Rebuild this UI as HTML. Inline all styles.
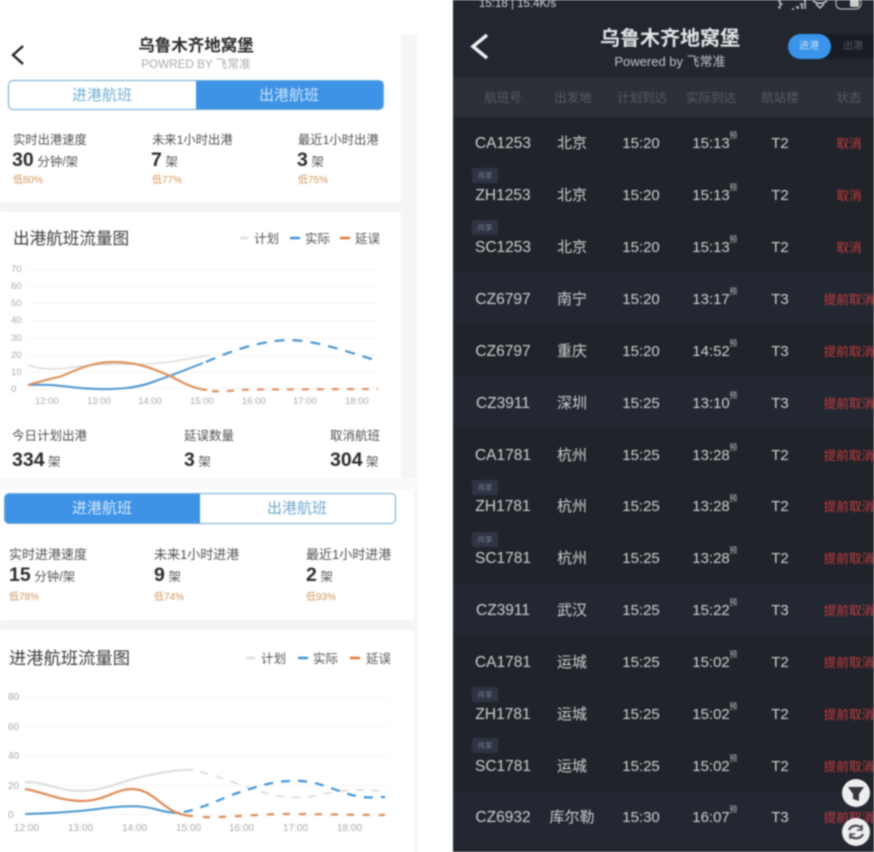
<!DOCTYPE html>
<html lang="zh"><head><meta charset="utf-8"><style>
html,body{margin:0;padding:0;width:874px;height:852px;overflow:hidden;background:#fff}
#w{position:absolute;left:0;top:0;width:874px;height:852px;overflow:hidden;filter:blur(.7px);font-family:"Liberation Sans","Noto Sans CJK SC",sans-serif}
.a{position:absolute;white-space:nowrap;line-height:1}
.c{transform:translateX(-50%)}
.b{font-weight:700;color:#2d2d2d;font-size:19.5px}
.u{font-size:12.5px;color:#555;font-weight:400;margin-left:3.5px}
.o{color:#d39559;font-size:10px}
.t{color:#505050;font-size:12.3px}
.t2{color:#505050;font-size:13px}
.l{color:#555;font-size:12.5px}
.row{position:absolute;left:453px;width:421px;height:52px;color:#cfd0d3;font-size:15px}
.row span{position:absolute;top:19px;line-height:16px;white-space:nowrap;transform:translateX(-50%)}
.row.x span{top:20px}
.row .f{left:50px;font-size:15.500px}.row .o1{left:119px}.row .p{left:188px}.row .r{left:258px}.row .m{left:327px}
.row .s{left:396px;color:#c23c3e;font-size:12.700px}
.row .r sup{position:absolute;left:37px;top:-5px;font-size:8px;line-height:9px;color:#bbb}
.row i{position:absolute;left:19px;top:0;width:26px;height:15px;border-radius:2px;background:#2f3545;color:#7a7f8c;font-size:7.500px;line-height:15px;text-align:center;font-style:normal}
.lt{background:#232731}.dk{background:#202329}
svg{position:absolute;left:0;top:0}
</style></head><body><div id="w">

<!-- left panel 1 -->
<div class="a" style="left:401px;top:35px;width:16px;height:443px;background:#f5f5f5"></div>
<div class="a" style="left:0;top:202px;width:401px;height:10px;background:#f5f5f5"></div>
<div class="a" style="left:0;top:478px;width:417px;height:12px;background:#fafafa"></div>
<div class="a c" style="left:196px;top:38px;font-size:16.500px;font-weight:700;color:#2d2d2d">乌鲁木齐地窝堡</div>
<div class="a c" style="left:196px;top:59px;font-size:11.700px;color:#aaa">POWRED BY 飞常准</div>
<div class="a" style="left:8px;top:80px;width:376px;height:30px;box-sizing:border-box;border:1.5px solid #6aa9cf;border-radius:5px;overflow:hidden;background:#fff">
  <div class="a" style="left:187px;top:-2px;width:190px;height:32px;background:#3e93e6"></div></div>
<div class="a c" style="left:102px;top:88px;font-size:15px;color:#71aed4">进港航班</div>
<div class="a c" style="left:289px;top:88px;font-size:15px;color:#cfe4f8">出港航班</div>

<div class="a t" style="left:13px;top:134px">实时出港速度</div>
<div class="a t" style="left:152px;top:134px">未来1小时出港</div>
<div class="a t" style="left:298px;top:134px">最近1小时出港</div>
<div class="a b" style="left:12px;top:151px">30<span class="u">分钟/架</span></div>
<div class="a b" style="left:151px;top:151px">7<span class="u">架</span></div>
<div class="a b" style="left:297px;top:151px">3<span class="u">架</span></div>
<div class="a o" style="left:13px;top:176px">低80%</div>
<div class="a o" style="left:152px;top:176px">低77%</div>
<div class="a o" style="left:298px;top:176px">低75%</div>

<div class="a" style="left:13px;top:231px;font-size:16.600px;color:#3d3d3d">出港航班流量图</div>
<div class="a l" style="left:254px;top:233px">计划</div>
<div class="a l" style="left:305px;top:233px">实际</div>
<div class="a l" style="left:355px;top:233px">延误</div>

<div class="a t" style="left:12px;top:430px;font-size:12.500px">今日计划出港</div>
<div class="a t" style="left:184px;top:430px;font-size:12.500px">延误数量</div>
<div class="a t" style="left:330px;top:430px;font-size:12.500px">取消航班</div>
<div class="a b" style="left:12px;top:451px">334<span class="u">架</span></div>
<div class="a b" style="left:184px;top:451px">3<span class="u">架</span></div>
<div class="a b" style="left:330px;top:451px">304<span class="u">架</span></div>

<!-- left panel 2 -->
<div class="a" style="left:414px;top:490px;width:4px;height:362px;background:#f6f6f6"></div>
<div class="a" style="left:0;top:620px;width:414px;height:10px;background:#f5f5f5"></div>
<div class="a" style="left:4px;top:493px;width:392px;height:31px;box-sizing:border-box;border:1.5px solid #6aa9cf;border-radius:5px;overflow:hidden;background:#fff">
  <div class="a" style="left:-2px;top:-2px;width:197px;height:33px;background:#3e93e6"></div></div>
<div class="a c" style="left:102px;top:501px;font-size:15px;color:#d5e8fa">进港航班</div>
<div class="a c" style="left:297px;top:501px;font-size:15px;color:#6fa9cc">出港航班</div>

<div class="a t2" style="left:9px;top:548px">实时进港速度</div>
<div class="a t2" style="left:154px;top:548px">未来1小时进港</div>
<div class="a t2" style="left:306px;top:548px">最近1小时进港</div>
<div class="a b" style="left:9px;top:566px">15<span class="u">分钟/架</span></div>
<div class="a b" style="left:154px;top:566px">9<span class="u">架</span></div>
<div class="a b" style="left:306px;top:566px">2<span class="u">架</span></div>
<div class="a o" style="left:9px;top:593px">低78%</div>
<div class="a o" style="left:154px;top:593px">低74%</div>
<div class="a o" style="left:306px;top:593px">低93%</div>

<div class="a" style="left:9px;top:650px;font-size:17.300px;color:#3d3d3d">进港航班流量图</div>
<div class="a l" style="left:261px;top:653px">计划</div>
<div class="a l" style="left:313px;top:653px">实际</div>
<div class="a l" style="left:366px;top:653px">延误</div>

<svg width="453" height="852" viewBox="0 0 453 852" fill="none">
<path d="M23 46L13 55L23 64" stroke="#222" stroke-width="2.400"/>
<g stroke-width="2.500"><path d="M240 238h8" stroke="#ddd"/><path d="M290 238h10" stroke="#3e93d8"/><path d="M340 238h10" stroke="#e0763a"/>
<path d="M246 658h9" stroke="#ddd"/><path d="M298 658h10" stroke="#3e93d8"/><path d="M350 658h10" stroke="#e0763a"/></g>
<!-- chart1 -->
<g stroke="#f6f6f6"><path d="M28 269.500H378M28 286.500H378M28 303.500H378M28 320.500H378M28 338.500H378M28 355.500H378M28 372.500H378M28 388.500H378"/></g>
<g fill="#aaa" font-size="9.500" font-family="Liberation Sans"><text x="11" y="272">70</text><text x="11" y="289">60</text><text x="11" y="306">50</text><text x="11" y="323">40</text><text x="11" y="341">30</text><text x="11" y="358">20</text><text x="11" y="375">10</text><text x="11" y="392">0</text>
<text x="35" y="404">12:00</text><text x="87" y="404">13:00</text><text x="138" y="404">14:00</text><text x="190" y="404">15:00</text><text x="242" y="404">16:00</text><text x="293" y="404">17:00</text><text x="345" y="404">18:00</text></g>
<path d="M28 365C42 370 55 370 75 367C105 362 135 366 160 363C178 361 195 358 210 355" stroke="#dcdcdc" stroke-width="1.500"/>
<path d="M28 385C50 384 60 386 80 388C105 390 130 390 150 383C170 376 188 369 203 363" stroke="#4a95cf" stroke-width="2"/>
<path d="M206 362C230 351 260 341 288 340C315 340 345 351 378 361" stroke="#4a95cf" stroke-width="2.200" stroke-dasharray="10 8"/>
<path d="M28 385C45 380 55 378 62 376C80 368 95 362 113 362C135 362 150 367 170 376C185 384 195 389 207 390" stroke="#de9160" stroke-width="2.200"/>
<path d="M212 391C225 392 235 390 250 389.500L378 389" stroke="#de9160" stroke-width="2.200" stroke-dasharray="7 8"/>
<!-- chart2 -->
<g stroke="#f6f6f6"><path d="M25 697.500H388M25 726.500H388M25 756.500H388M25 785.500H388M25 814.500H388"/></g>
<g fill="#aaa" font-size="10" font-family="Liberation Sans"><text x="8" y="700">80</text><text x="8" y="730">60</text><text x="8" y="759">40</text><text x="8" y="789">20</text><text x="8" y="818">0</text>
<text x="14" y="831">12:00</text><text x="68" y="831">13:00</text><text x="122" y="831">14:00</text><text x="176" y="831">15:00</text><text x="229" y="831">16:00</text><text x="283" y="831">17:00</text><text x="337" y="831">18:00</text></g>
<path d="M25 782C45 782 60 791 80 791C105 791 120 781 145 776C165 772 180 769 193 770" stroke="#dcdcdc" stroke-width="2"/>
<path d="M200 772C215 775 240 785 262 792C280 798 300 799 320 795C345 788 365 790 388 791" stroke="#dcdcdc" stroke-width="1.800" stroke-dasharray="8 8"/>
<path d="M25 814C60 813 85 811 105 808C125 806 140 805 155 809C165 812 172 813 180 813" stroke="#4a95cf" stroke-width="2"/>
<path d="M184 812C205 808 225 796 250 789C270 782 290 779 310 782C330 786 345 795 362 797C370 798 378 797 385 797" stroke="#3f93d6" stroke-width="2.200" stroke-dasharray="9 8"/>
<path d="M25 789C40 791 60 801 82 801C105 801 115 789 132 789C150 789 160 805 175 812C182 815 188 816 193 816" stroke="#de8a55" stroke-width="2.200"/>
<path d="M203 817C215 818 250 815 280 814C320 814 350 815 385 815" stroke="#de8a55" stroke-width="2.200" stroke-dasharray="7 9"/>
</svg>

<!-- dark panel -->
<div class="a" style="left:453px;top:0;width:421px;height:852px;background:#22262f"></div>
<div class="a" style="left:479px;top:-1px;font-size:11.500px;color:#d5d6d8">15:18 | 15.4K/s</div>
<svg width="874" height="80" viewBox="0 0 874 80" fill="none">
<path d="M778 1L782 4L778 8M780 0V9" stroke="#ccc" stroke-width="1"/>
<path d="M792 9h2M796 7h2v2M800 4h2v5M804 0h1v9" stroke="#ccc" stroke-width="1.500"/>
<path d="M813 1C817 4 823 4 827 1M816 4L820 8L824 4" stroke="#ccc" stroke-width="1.500"/>
<rect x="836" y="-3" width="25" height="12" rx="5" stroke="#ccc"/><rect x="850" y="-1" width="9" height="8" rx="2" fill="#ccc"/>
<path d="M487 35L473 46.500L487 58" stroke="#eee" stroke-width="3.500"/>
</svg>
<div class="a c" style="left:670px;top:29px;font-size:20px;font-weight:700;color:#e4e5e7">乌鲁木齐地窝堡</div>
<div class="a c" style="left:670px;top:55px;font-size:13px;color:#c3c4c7">Powered by 飞常准</div>
<div class="a" style="left:788px;top:34px;width:86px;height:25px;border-radius:12.500px 0 0 12.500px;background:#191c22"></div>
<div class="a" style="left:788px;top:34px;width:43px;height:25px;border-radius:13px;background:#3994ea"></div>
<div class="a c" style="left:809px;top:42px;font-size:10px;color:#c4e0fa">进港</div>
<div class="a c" style="left:853px;top:42px;font-size:10px;color:#555a63">出港</div>

<div class="a" style="left:453px;top:78px;width:421px;height:39px;background:#2c3039"></div>
<div class="a c" style="left:503px;top:92px;font-size:12.500px;color:#565b65">航班号</div>
<div class="a c" style="left:573px;top:92px;font-size:12.500px;color:#565b65">出发地</div>
<div class="a c" style="left:642px;top:92px;font-size:12.500px;color:#565b65">计划到达</div>
<div class="a c" style="left:711px;top:92px;font-size:12.500px;color:#565b65">实际到达</div>
<div class="a c" style="left:780px;top:92px;font-size:12.500px;color:#565b65">航站楼</div>
<div class="a c" style="left:849px;top:92px;font-size:12.500px;color:#565b65">状态</div>

<div class="row dk" style="top:117px"><span class="f">CA1253</span><span class="o1">北京</span><span class="p">15:20</span><span class="r">15:13<sup>预</sup></span><span class="m">T2</span><span class="s">取消</span></div>
<div class="row dk" style="top:169px"><i style="top:-1px">共享</i><span class="f">ZH1253</span><span class="o1">北京</span><span class="p">15:20</span><span class="r">15:13<sup>预</sup></span><span class="m">T2</span><span class="s">取消</span></div>
<div class="row dk x" style="top:220px"><i>共享</i><span class="f">SC1253</span><span class="o1">北京</span><span class="p">15:20</span><span class="r">15:13<sup>预</sup></span><span class="m">T2</span><span class="s">取消</span></div>
<div class="row lt x" style="top:272px"><span class="f">CZ6797</span><span class="o1">南宁</span><span class="p">15:20</span><span class="r">13:17<sup>预</sup></span><span class="m">T3</span><span class="s">提前取消</span></div>
<div class="row dk x" style="top:324px"><span class="f">CZ6797</span><span class="o1">重庆</span><span class="p">15:20</span><span class="r">14:52<sup>预</sup></span><span class="m">T3</span><span class="s">提前取消</span></div>
<div class="row lt x" style="top:376px"><span class="f">CZ3911</span><span class="o1">深圳</span><span class="p">15:25</span><span class="r">13:10<sup>预</sup></span><span class="m">T3</span><span class="s">提前取消</span></div>
<div class="row dk x" style="top:428px"><span class="f">CA1781</span><span class="o1">杭州</span><span class="p">15:25</span><span class="r">13:28<sup>预</sup></span><span class="m">T2</span><span class="s">提前取消</span></div>
<div class="row dk" style="top:480px"><i>共享</i><span class="f">ZH1781</span><span class="o1">杭州</span><span class="p">15:25</span><span class="r">13:28<sup>预</sup></span><span class="m">T2</span><span class="s">提前取消</span></div>
<div class="row dk x" style="top:531px"><i style="top:1px">共享</i><span class="f">SC1781</span><span class="o1">杭州</span><span class="p">15:25</span><span class="r">13:28<sup>预</sup></span><span class="m">T2</span><span class="s">提前取消</span></div>
<div class="row lt x" style="top:583px"><span class="f">CZ3911</span><span class="o1">武汉</span><span class="p">15:25</span><span class="r">15:22<sup>预</sup></span><span class="m">T3</span><span class="s">提前取消</span></div>
<div class="row dk x" style="top:635px"><span class="f">CA1781</span><span class="o1">运城</span><span class="p">15:25</span><span class="r">15:02<sup>预</sup></span><span class="m">T2</span><span class="s">提前取消</span></div>
<div class="row dk x" style="top:687px"><i>共享</i><span class="f">ZH1781</span><span class="o1">运城</span><span class="p">15:25</span><span class="r">15:02<sup>预</sup></span><span class="m">T2</span><span class="s">提前取消</span></div>
<div class="row dk x" style="top:739px"><i style="top:-1px">共享</i><span class="f">SC1781</span><span class="o1">运城</span><span class="p">15:25</span><span class="r">15:02<sup>预</sup></span><span class="m">T2</span><span class="s">提前取消</span></div>
<div class="row lt" style="top:791px"><span class="f">CZ6932</span><span class="o1">库尔勒</span><span class="p">15:30</span><span class="r">16:07<sup>预</sup></span><span class="m">T3</span><span class="s">提前取消</span></div>

<svg width="874" height="852" viewBox="0 0 874 852" fill="none">
<circle cx="856" cy="793" r="14" fill="#eee"/><path d="M848 787H864L859 794V801L853 799V794Z" fill="#33363d"/>
<circle cx="856" cy="832" r="14" fill="#eee"/>
<path d="M849 830C851 825 859 824 862 829M863 834C861 839 853 840 850 835" stroke="#44474e" stroke-width="2.200"/>
<path d="M862 825V830H857M850 839V834H855" stroke="#44474e" stroke-width="1.500"/>
</svg>
</div></body></html>
